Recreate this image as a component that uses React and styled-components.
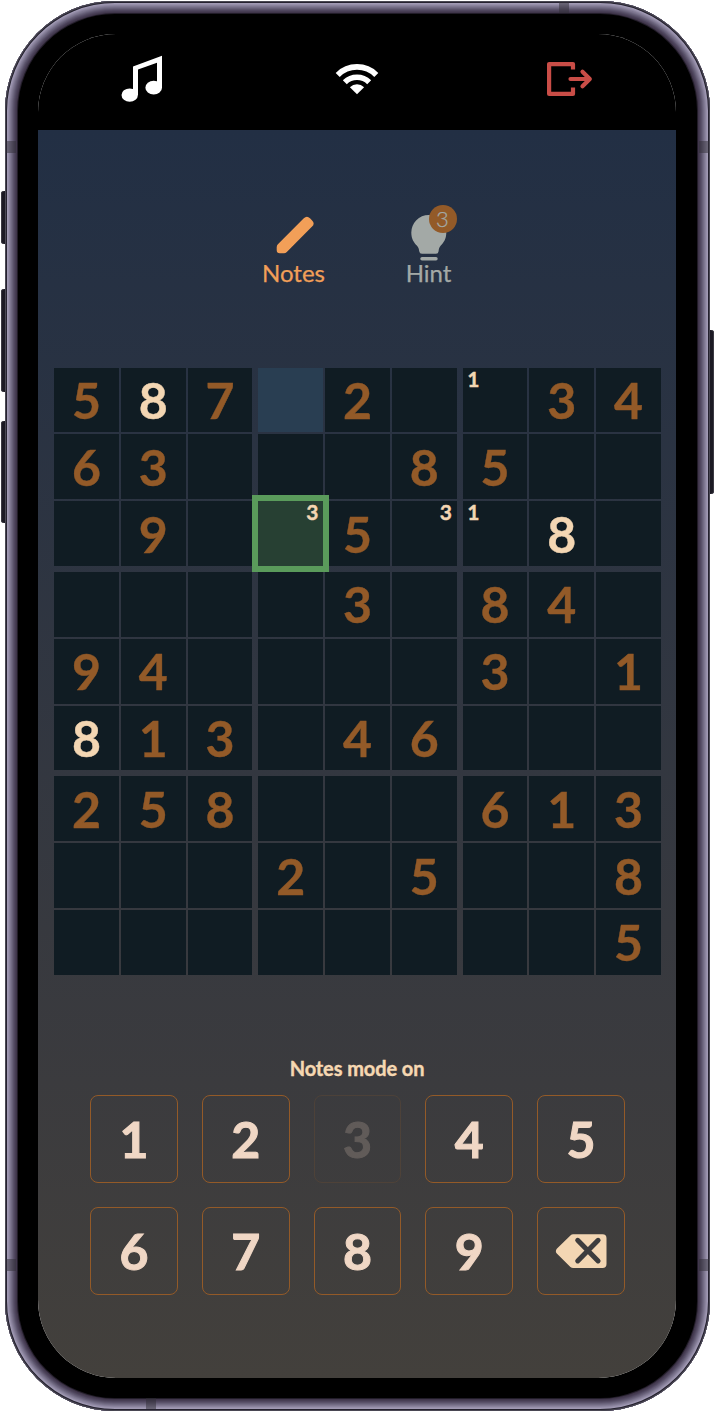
import React from "react";
import styled, { createGlobalStyle } from "styled-components";

const GlobalStyle = createGlobalStyle`
  *, *::before, *::after { box-sizing: border-box; }
  body { margin: 0; background: #fff; font-family: Lato, "Open Sans", sans-serif; }
  button { font-family: inherit; padding: 0; background: none; }
`;

const Stage = styled.main`
  position: relative;
  width: 715px;
  height: 1412px;
  padding: 1px 5px 1px 5px;
  overflow: hidden;
`;

const Phone = styled.div`
  position: relative;
  width: 705px;
  height: 1410px;
  padding: 33px 33px 32px 33px;
  border-radius: 110px;
  background: #000;
  box-shadow:
    inset 0 0 0 1px #4a4853,
    inset 0 0 0 2px #24212e,
    inset 0 0 0 3px #a099b3,
    inset 0 0 0 4px #9790aa,
    inset 0 0 0 5px #8a839d,
    inset 0 0 0 6px #7e7790,
    inset 0 0 0 7px #726b84,
    inset 0 0 0 8px #665f77,
    inset 0 0 0 9px #5a526a,
    inset 0 0 0 10px #50475f,
    inset 0 0 0 11px #473e54,
    inset 0 0 0 12px #40364b,
    inset 0 0 0 13px #211c28;
`;

const SideButton = styled.span`
  position: absolute;
  width: 5px;
  top: ${(p) => p.$top}px;
  height: ${(p) => p.$height}px;
  ${(p) => (p.$right ? "left: 709px;" : "left: 1px;")}
  border-radius: ${(p) => (p.$right ? "0 3px 3px 0" : "3px 0 0 3px")};
  background: #1c1a24;
  box-shadow: inset ${(p) => (p.$right ? "-1px" : "1px")} 0 0 #3b3942;
`;

const Antenna = styled.span`
  position: absolute;
  left: ${(p) => p.$x}px;
  top: ${(p) => p.$y}px;
  width: 10px;
  height: ${(p) => (p.$flat ? 11 : 12)}px;
  background: rgba(48, 46, 54, 0.5);
`;

const Glass = styled.div`
  width: 638px;
  height: 1344px;
  border-radius: 78px;
  background: #fff;
`;

const Screen = styled.div`
  display: flex;
  flex-direction: column;
  width: 100%;
  height: 100%;
  overflow: hidden;
  border-radius: 78px;
  background: linear-gradient(#000 96px, transparent 96px),
    linear-gradient(#222f44 96px, #3b3b3e 78%, #43403c);
`;

const TopBar = styled.header`
  display: flex;
  justify-content: space-between;
  height: 96px;
  padding: 20px 81px 0 80px;
  svg { display: block; width: 50px; height: 50px; }
`;

const Tools = styled.nav`
  display: flex;
  justify-content: center;
  gap: 55px;
  height: 237.7px;
  padding: 72px 0 0 8px;
`;

const Tool = styled.button`
  position: relative;
  display: flex;
  flex-direction: column;
  align-items: center;
  width: 80px;
  height: 90px;
  border: 0;
  color: ${(p) => p.$color};
  font-size: 24px;
  line-height: 26px;
  -webkit-text-stroke: 0.25px currentColor;
  svg { display: block; width: 50px; height: 58px; flex: none; }
`;

const Badge = styled.span`
  position: absolute;
  top: 3px;
  left: 40px;
  width: 28px;
  height: 28px;
  border-radius: 50%;
  background: #935a28;
  font-size: 22px;
  font-weight: 300;
  line-height: 28px;
  text-align: center;
`;

const Board = styled.section`
  display: grid;
  grid-template-columns: repeat(3, 1fr);
  grid-template-rows: repeat(3, 1fr);
  gap: 6px;
  width: 607px;
  height: 607px;
  margin-left: 16px;
  flex: none;
`;

const Box = styled.div`
  display: grid;
  grid-template-columns: repeat(3, minmax(0, 1fr));
  grid-template-rows: repeat(3, minmax(0, 1fr));
  gap: 2px;
  min-height: 0;
`;

const cellColors = { plain: "#101c23", peer: "#293e52", active: "#274033" };

const Cell = styled.div`
  display: flex;
  align-items: center;
  justify-content: center;
  min-height: 0;
  background: ${(p) => cellColors[p.$state]};
  box-shadow: ${(p) => (p.$state === "active" ? "0 0 0 6px #5a9b5b" : "none")};
  z-index: ${(p) => (p.$state === "active" ? 1 : 0)};
  color: ${(p) => (p.$entered ? "#f3d6b3" : "#935a28")};
  font-size: 50px;
  font-weight: 700;
  line-height: 60px;
  -webkit-text-stroke: 0.4px currentColor;
`;

const NoteGrid = styled.div`
  display: grid;
  grid-template-columns: repeat(3, 1fr);
  grid-template-rows: repeat(3, 1fr);
  width: 100%;
  height: 100%;
  color: #f3d6b3;
  font-size: 21px;
  line-height: 22px;
  text-align: center;
`;

const Note = styled.span`
  grid-column: ${(p) => ((p.$n - 1) % 3) + 1};
  grid-row: ${(p) => Math.ceil(p.$n / 3)};
`;

const Mode = styled.p`
  margin: 80.3px 0 0;
  height: 40px;
  color: #f6d8b2;
  font-size: 20px;
  font-weight: 700;
  letter-spacing: -0.1px;
  line-height: 26px;
  text-align: center;
  -webkit-text-stroke: 0.4px currentColor;
`;

const Keypad = styled.section`
  display: grid;
  grid-template-columns: repeat(5, 87.8px);
  grid-template-rows: repeat(2, 88px);
  gap: 24px;
  padding-left: 52px;
`;

const Key = styled.button`
  display: flex;
  align-items: center;
  justify-content: center;
  border: 1px solid #935a28;
  border-radius: 8px;
  color: #f0d7c5;
  font-size: 50px;
  font-weight: 700;
  line-height: 60px;
  -webkit-text-stroke: 1px currentColor;
  opacity: ${(p) => (p.$off ? 0.2 : 1)};
  svg { display: block; width: 52px; height: 36px; }
`;

const MusicIcon = () => (
  <svg viewBox="118 54 50 50" fill="#fff">
    <path d="M133 66.4 162 55.8V88H157V62.8L138 69.6V95H133Z" />
    <ellipse cx="129.7" cy="95.1" rx="8.2" ry="6.7" />
    <ellipse cx="153.7" cy="87.7" rx="8.3" ry="6.9" />
  </svg>
);

const WifiIcon = () => (
  <svg viewBox="331.5 54 50 50" fill="none" stroke="#fff" strokeWidth="5.7">
    <path d="M337.2 74.9A27.4 27.4 0 0 1 375.8 74.9" />
    <path d="M344.3 82.2A17.5 17.5 0 0 1 368.7 82.2" />
    <path d="M356.5 94.3 349.4 87.2A10.2 10.2 0 0 1 363.6 87.2Z" fill="#fff" stroke="none" />
  </svg>
);

const ExitIcon = () => (
  <svg viewBox="545 54 50 50" fill="none" stroke="#c94d47" strokeWidth="4.2" strokeLinejoin="round">
    <path d="M573 69.6V64.1H549.1V93.9H573V87.6" />
    <path d="M570.5 79H589M582.5 71.8 589.8 79 582.5 86.2" strokeLinecap="round" />
  </svg>
);

const PencilIcon = () => (
  <svg viewBox="269 202 50 58" fill="currentColor" stroke="none">
    <path d="M276.7 247.2Q276.7 245.4 277.9 244.2L303.8 218.3Q306.9 215.2 310 218.3L312.1 220.4Q315.2 223.5 312.1 226.6L286.8 252Q285.6 253.2 284 253.2H279.7Q276.7 253.2 276.7 250.2Z" />
  </svg>
);

const BulbIcon = () => (
  <svg viewBox="404 202 50 58" fill="currentColor" stroke="none" overflow="visible">
    <path d="M428.7 215A17.4 17.4 0 0 0 411.3 232.6C411.3 239.2 414 242.7 416.8 245.6C418.7 247.6 418.8 248.8 419.2 251.2Q419.6 253.8 422 253.8H436Q438.3 253.8 438.6 251.2C438.9 248.8 439 247.6 440.8 245.6C443.6 242.7 446.3 239.2 446.3 232.6A17.4 17.4 0 0 0 428.7 215Z" />
    <rect x="420.3" y="257" width="17.4" height="3.4" rx="1.7" />
  </svg>
);

const EraseIcon = () => (
  <svg viewBox="555 1233 52 36">
    <path
      fill="#f3d6b3"
      d="M573.2 1234.2H602.5Q606.5 1234.2 606.5 1238.2V1264Q606.5 1268 602.5 1268H573.2Q571.6 1268 570.4 1267L556.8 1253.5Q554.9 1251.2 556.8 1248.8L570.4 1235.4Q571.6 1234.2 573.2 1234.2Z"
    />
    <path d="M577.7 1240.3 598.1 1260.9M598.1 1240.3 577.7 1260.9" stroke="#3d3c3d" strokeWidth="5" strokeLinecap="round" />
  </svg>
);

// Rows of the puzzle; "." marks an empty square.
const rows = [
  "587.2..34",
  "63...85..",
  ".9..5..8.",
  "....3.84.",
  "94....3.1",
  "813.46...",
  "258...613",
  "...2.5..8",
  "........5",
];
const entered = new Set(["0-1", "2-7", "5-0"]);
const notes = { "0-6": [1], "2-3": [3], "2-5": [3], "2-6": [1] };
const states = { "0-3": "peer", "2-3": "active" };
const nine = [0, 1, 2, 3, 4, 5, 6, 7, 8];

function Square({ row, col }) {
  const id = `${row}-${col}`;
  const value = rows[row][col];
  return (
    <Cell $state={states[id] || "plain"} $entered={entered.has(id)}>
      {value !== "." && value}
      {notes[id] && (
        <NoteGrid>
          {notes[id].map((n) => (
            <Note key={n} $n={n}>{n}</Note>
          ))}
        </NoteGrid>
      )}
    </Cell>
  );
}

export default function App() {
  return (
    <Stage>
      <GlobalStyle />
      <SideButton $top={191} $height={53} />
      <SideButton $top={289} $height={103} />
      <SideButton $top={421} $height={102} />
      <SideButton $right $top={330} $height={164} />
      <Phone>
        <Glass>
          <Screen>
            <TopBar>
              <MusicIcon />
              <WifiIcon />
              <ExitIcon />
            </TopBar>
            <Tools>
              <Tool $color="#f29f58">
                <PencilIcon />
                Notes
              </Tool>
              <Tool $color="#a3a9a6">
                <BulbIcon />
                Hint
                <Badge>3</Badge>
              </Tool>
            </Tools>
            <Board>
              {nine.map((b) => (
                <Box key={b}>
                  {nine.map((c) => (
                    <Square
                      key={c}
                      row={Math.floor(b / 3) * 3 + Math.floor(c / 3)}
                      col={(b % 3) * 3 + (c % 3)}
                    />
                  ))}
                </Box>
              ))}
            </Board>
            <Mode>Notes mode on</Mode>
            <Keypad>
              {nine.map((n) => (
                <Key key={n} $off={n === 2}>{n + 1}</Key>
              ))}
              <Key aria-label="Erase">
                <EraseIcon />
              </Key>
            </Keypad>
          </Screen>
        </Glass>
      </Phone>
      <Antenna $flat $x={559} $y={2} />
      <Antenna $flat $x={146} $y={1398} />
      <Antenna $x={6} $y={141} />
      <Antenna $x={699} $y={141} />
      <Antenna $x={6} $y={1259} />
      <Antenna $x={699} $y={1259} />
    </Stage>
  );
}
